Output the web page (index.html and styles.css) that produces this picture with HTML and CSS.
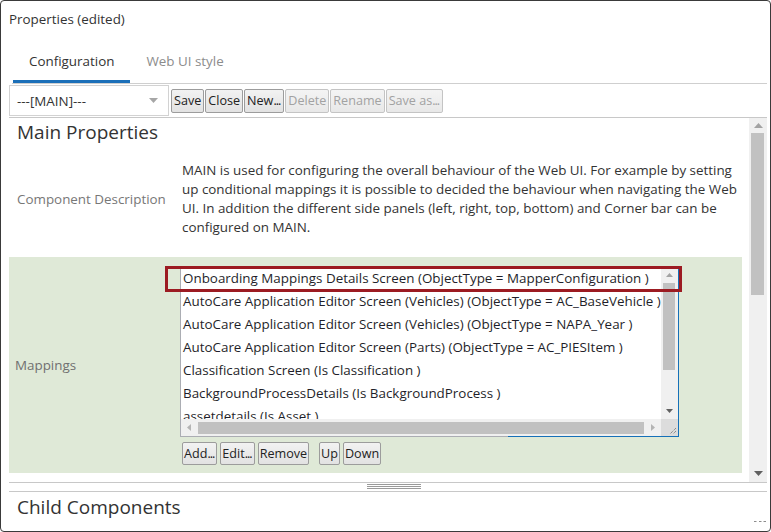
FILE: index.html
```html
<!DOCTYPE html>
<html>
<head>
<meta charset="utf-8">
<title>Properties</title>
<link rel="stylesheet" href="styles.css">
</head>
<body>
<div class="window">
  <div class="title">Properties (edited)</div>
  <div class="tabs">
    <div class="tab tab--active">Configuration</div>
    <div class="tab">Web UI style</div>
  </div>
  <div class="toolbar">
    <div class="select">
      <span>---[MAIN]---</span>
      <svg class="caret" width="9" height="5" viewBox="0 0 9 5"><path d="M0 0H9L4.5 5Z" fill="#a6a6a6"/></svg>
    </div>
    <button class="btn">Save</button>
    <button class="btn">Close</button>
    <button class="btn">New<span class="dots">...</span></button>
    <button class="btn" disabled>Delete</button>
    <button class="btn" disabled>Rename</button>
    <button class="btn" disabled>Save as<span class="dots">...</span></button>
  </div>
  <div class="pane">
    <div class="pane-body">
      <h2 class="section-title">Main Properties</h2>
      <div class="prop-row prop-row--desc">
        <div class="prop-label">Component Description</div>
        <div class="prop-value">MAIN is used for configuring the overall behaviour of the Web UI. For example by setting up conditional mappings it is possible to decided the behaviour when navigating the Web UI. In addition the different side panels (left, right, top, bottom) and Corner bar can be configured on MAIN.</div>
      </div>
      <div class="prop-row prop-row--mappings">
        <div class="prop-label">Mappings</div>
        <div class="prop-value">
          <div class="listbox">
            <div class="listbox-main">
              <ul class="list-items">
                <li>Onboarding Mappings Details Screen (ObjectType = MapperConfiguration )</li>
                <li>AutoCare Application Editor Screen (Vehicles) (ObjectType = AC_BaseVehicle )</li>
                <li>AutoCare Application Editor Screen (Vehicles) (ObjectType = NAPA_Year )</li>
                <li>AutoCare Application Editor Screen (Parts) (ObjectType = AC_PIESItem )</li>
                <li>Classification Screen (Is Classification )</li>
                <li>BackgroundProcessDetails (Is BackgroundProcess )</li>
                <li>assetdetails (Is Asset )</li>
              </ul>
              <div class="sb-v sb-v--small">
                <div class="sb-btn sb-btn--up-s"><svg width="7" height="4" viewBox="0 0 7 4"><path d="M0 4L3.5 0L7 4Z" fill="#a3a3a3"/></svg></div>
                <div class="sb-thumb sb-thumb--list"></div>
                <div class="sb-fill"></div>
                <div class="sb-btn sb-btn--down-s"><svg width="7" height="4" viewBox="0 0 7 4"><path d="M0 0H7L3.5 4Z" fill="#606060"/></svg></div>
              </div>
            </div>
            <div class="listbox-bottom">
              <div class="sb-h">
                <div class="sb-hbtn"><svg width="4" height="7" viewBox="0 0 4 7"><path d="M4 0V7L0 3.5Z" fill="#b4b4b4"/></svg></div>
                <div class="sb-hthumb"></div>
                <div class="sb-hbtn"><svg width="4" height="7" viewBox="0 0 4 7"><path d="M0 0V7L4 3.5Z" fill="#b4b4b4"/></svg></div>
              </div>
              <div class="sb-corner"><svg width="17" height="17" viewBox="0 0 17 17"><path d="M15 9L9 15M15 12L12 15" stroke="#6a6a6a" stroke-width="1" stroke-dasharray="1 1"/></svg></div>
            </div>
            <div class="highlight"></div>
          </div>
          <div class="list-buttons">
            <button class="btn btn--sm">Add<span class="dots">...</span></button>
            <button class="btn btn--sm">Edit<span class="dots">...</span></button>
            <button class="btn btn--sm">Remove</button>
            <button class="btn btn--sm btn--gap">Up</button>
            <button class="btn btn--sm">Down</button>
          </div>
        </div>
      </div>
    </div>
    <div class="sb-v sb-v--main">
      <div class="sb-btn sb-btn--up"><svg width="9" height="5" viewBox="0 0 9 5"><path d="M0 5L4.5 0L9 5Z" fill="#a3a3a3"/></svg></div>
      <div class="sb-thumb sb-thumb--main"></div>
      <div class="sb-fill"></div>
      <div class="sb-btn sb-btn--down"><svg width="9" height="5" viewBox="0 0 9 5"><path d="M0 0H9L4.5 5Z" fill="#606060"/></svg></div>
    </div>
  </div>
  <div class="splitter"><div class="grip"></div></div>
  <div class="pane2">
    <h2 class="section-title">Child Components</h2>
  </div>
  <svg class="resize-dots" width="12" height="1" viewBox="0 0 12 1"><path d="M0 0.5H2.5M5 0.5H7.5M9.5 0.5H12" stroke="#8c8c8c" stroke-width="1"/></svg>
</div>
</body>
</html>
```
FILE: styles.css
```css
* { box-sizing: border-box; }
body {
  margin: 0;
  font-family: "Open Sans", "Noto Sans", sans-serif;
  font-size: 13.4px;
  color: #333;
  background: #fff;
}
.window {
  position: relative;
  width: 771px;
  height: 532px;
  border: 1px solid #3a3a3a;
  border-radius: 4px;
  display: flex;
  flex-direction: column;
  overflow: hidden;
  background: #fff;
}
.title {
  height: 36px;
  padding: 9px 8px 0;
  line-height: 18px;
  color: #333;
}
.tabs {
  display: flex;
  margin: 0 3px 0 11px;
  padding-left: 1px;
  border-bottom: 1px solid #cfcfcf;
}
.tab {
  padding: 15px 16px 10px;
  line-height: 18px;
  border-bottom: 3px solid transparent;
  color: #8c8c8c;
}
.tab--active {
  color: #333;
  border-bottom-color: #1b6fb8;
}
.toolbar {
  display: flex;
  align-items: center;
  gap: 1px;
  margin: 0 3px 0 8px;
  padding: 1px 0;
  border-bottom: 1px solid #c8c8c8;
}
.select {
  width: 160px;
  height: 31px;
  margin-right: 1px;
  padding: 0 10px 0 7px;
  border: 1px solid #d2d2d2;
  display: flex;
  align-items: center;
  justify-content: space-between;
  color: #333;
}
.btn {
  font-family: inherit;
  font-size: 12.6px;
  height: 24px;
  padding: 0 2px;
  margin: 0;
  border: 1px solid #9c9c9c;
  border-radius: 2px;
  background: linear-gradient(#f2f2f2, #e2e2e2);
  color: #222;
  line-height: 20px;
}
.btn .dots { letter-spacing: -1px; margin-right: 1px; }
.btn:disabled {
  color: #a2a2a2;
  border-color: #c4c4c4;
  background: linear-gradient(#f4f4f4, #e8e8e8);
}
.pane {
  flex: none;
  height: 364px;
  margin: 0 3px 0 8px;
  display: flex;
}
.pane-body {
  flex: 1;
  overflow: hidden;
}
.section-title {
  margin: 0;
  padding-left: 8px;
  font-size: 19px;
  font-weight: 400;
  line-height: 28px;
  color: #333;
}
.prop-row {
  display: flex;
  align-items: center;
  width: 733px;
}
.prop-row--desc {
  margin-top: 15px;
  padding-bottom: 20px;
}
.prop-label {
  flex: none;
  width: 171px;
  padding-left: 8px;
  color: #777;
}
.prop-row--desc .prop-value {
  flex: 1;
  padding-left: 2px;
  line-height: 19px;
  color: #333;
}
.prop-row--mappings {
  background: #dfe9d7;
  padding: 9px 0 8px;
}
.prop-row--mappings .prop-label {
  padding-left: 6px;
  padding-bottom: 1px;
  color: #707070;
}
.listbox {
  position: relative;
  width: 499px;
  height: 171px;
  border: 1px solid #abadb3;
  border-right-color: #1670b8;
  background: #fff;
  display: flex;
  flex-direction: column;
}
.listbox::after {
  content: "";
  position: absolute;
  right: -1px;
  bottom: -1px;
  width: 171px;
  height: 1px;
  background: #1670b8;
}
.listbox-main {
  display: flex;
  height: 152px;
}
.list-items {
  flex: 1;
  margin: 0;
  padding: 0;
  list-style: none;
  overflow: hidden;
}
.list-items li {
  height: 23px;
  line-height: 23px;
  padding-left: 2px;
  white-space: nowrap;
  color: #1f1f2a;
}
.sb-v {
  flex: none;
  display: flex;
  flex-direction: column;
  background: #f0f0f0;
}
.sb-v--small { width: 17px; }
.sb-v--main { width: 18px; }
.sb-btn {
  display: flex;
  align-items: center;
  justify-content: center;
  flex: none;
}
.sb-btn--up-s { height: 16px; }
.sb-btn--down-s { height: 17px; }
.sb-btn--up { height: 15px; }
.sb-btn--down { height: 17px; }
.sb-fill { flex: 1; }
.sb-thumb {
  flex: none;
  background: #c1c1c1;
}
.sb-thumb--list {
  width: 12px;
  height: 87px;
  margin-left: 2px;
}
.sb-thumb--main {
  width: 13px;
  height: 162px;
  margin-left: 2px;
}
.listbox-bottom {
  display: flex;
  height: 17px;
}
.sb-h {
  flex: 1;
  display: flex;
  align-items: center;
  background: #f0f0f0;
}
.sb-hbtn {
  flex: none;
  width: 16px;
  height: 17px;
  display: flex;
  align-items: center;
  justify-content: center;
}
.sb-hthumb {
  flex: 1;
  height: 12px;
  margin: 0 1px;
  background: #c1c1c1;
}
.sb-corner {
  flex: none;
  width: 17px;
  height: 17px;
  background: #dcdcdc;
}
.sb-corner svg { display: block; }
.highlight {
  position: absolute;
  left: -16px;
  top: -1px;
  width: 517px;
  height: 26px;
  border: 3px solid #9c1b22;
}
.list-buttons {
  display: flex;
  gap: 3px;
  margin: 5px 0 0 2px;
}
.btn--sm { height: 23px; padding: 0 1px; }
.btn--gap { margin-left: 7px; }
.splitter {
  flex: none;
  height: 10px;
  margin: 0 3px 0 8px;
  border-top: 1px solid #c8c8c8;
  border-bottom: 1px solid #c8c8c8;
}
.grip {
  width: 54px;
  height: 5px;
  margin: 1px 0 0 358px;
  background: repeating-linear-gradient(#9a9a9a 0 1px, transparent 1px 2px);
}
.pane2 {
  flex: 1;
  margin: 1px 3px 0 8px;
}
.resize-dots {
  position: absolute;
  right: 4px;
  bottom: 9px;
}
```
